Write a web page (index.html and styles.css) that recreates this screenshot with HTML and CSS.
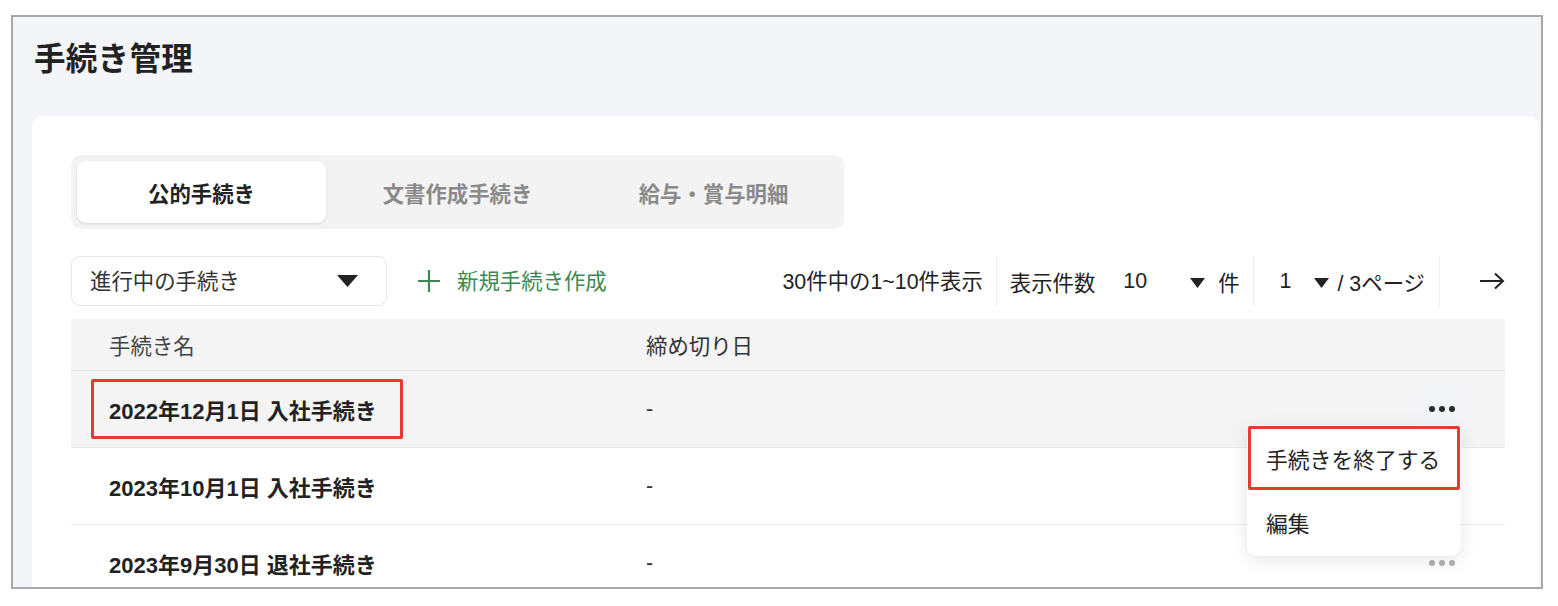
FILE: index.html
```html
<!DOCTYPE html>
<html lang="ja">
<head>
<meta charset="utf-8">
<title>手続き管理</title>
<link rel="stylesheet" href="styles.css">
</head>
<body>
<div class="frame">
  <h1 class="title">手続き管理</h1>
  <div class="card">
    <div class="tabs">
      <div class="tab active">公的手続き</div>
      <div class="tab">文書作成手続き</div>
      <div class="tab">給与・賞与明細</div>
    </div>

    <div class="toolbar">
      <div class="select">
        <span>進行中の手続き</span>
        <svg class="tri-lg" width="21" height="12" viewBox="0 0 21 12"><polygon points="0,0 21,0 10.5,12" fill="#222"/></svg>
      </div>
      <div class="new-btn">
        <svg width="22" height="22" viewBox="0 0 22 22"><path d="M11 0 V22 M0 11 H22" stroke="#3b8a52" stroke-width="2.2" fill="none"/></svg>
        <span>新規手続き作成</span>
      </div>
      <div class="pager">
        <div class="pg-item">30件中の1~10件表示</div>
        <div class="divider"></div>
        <div class="pg-item per">
          <span>表示件数</span>
          <span class="num">10</span>
          <svg class="tri" width="15" height="10" viewBox="0 0 15 10"><polygon points="0,0 15,0 7.5,10" fill="#222"/></svg>
          <span class="unit">件</span>
        </div>
        <div class="divider"></div>
        <div class="pg-item page">
          <span class="num">1</span>
          <svg class="tri" width="15" height="10" viewBox="0 0 15 10"><polygon points="0,0 15,0 7.5,10" fill="#222"/></svg>
          <span class="unit">/ 3ページ</span>
        </div>
        <div class="divider"></div>
        <div class="pg-item arrow">
          <svg width="25" height="18" viewBox="0 0 25 18"><path d="M0 9 H23 M15 1.5 L23 9 L15 16.5" stroke="#222" stroke-width="2" fill="none" stroke-linejoin="miter"/></svg>
        </div>
      </div>
    </div>

    <div class="table">
      <div class="row head">
        <div class="c-name">手続き名</div>
        <div class="c-date">締め切り日</div>
      </div>
      <div class="row body hover">
        <div class="c-name"><span class="name marked">2022年12月1日 入社手続き</span></div>
        <div class="c-date">-</div>
        <div class="c-act"><div class="dots on"><i></i><i></i><i></i></div></div>
        <div class="menu">
          <div class="menu-item marked">手続きを終了する</div>
          <div class="menu-item">編集</div>
        </div>
      </div>
      <div class="row body">
        <div class="c-name"><span class="name">2023年10月1日 入社手続き</span></div>
        <div class="c-date">-</div>
        <div class="c-act"><div class="dots"><i></i><i></i><i></i></div></div>
      </div>
      <div class="row body">
        <div class="c-name"><span class="name">2023年9月30日 退社手続き</span></div>
        <div class="c-date">-</div>
        <div class="c-act"><div class="dots"><i></i><i></i><i></i></div></div>
      </div>
    </div>
  </div>
</div>
</body>
</html>
```
FILE: styles.css
```css
* { box-sizing: border-box; }
html, body { margin: 0; padding: 0; background: #ffffff; }
body {
  font-family: "Liberation Sans", "Noto Sans CJK JP", sans-serif;
  color: #222;
}
.frame {
  margin: 15px 0 0 11px;
  width: 1532px;
  height: 574px;
  border: 2px solid #a9a9a9;
  background: #f4f5f9;
  overflow: hidden;
  padding: 0 0 0 19px;
}
.title {
  margin: 0;
  padding: 22px 0 0 2px;
  height: 63px;
  font-size: 31.5px;
  line-height: 40px;
  font-weight: 700;
  color: #222;
  letter-spacing: 0.3px;
}
.card {
  margin-top: 36px;
  width: 1507px;
  height: 600px;
  background: #fff;
  border-radius: 10px;
  padding: 39px 34px 0 39px;
}
.tabs {
  display: inline-flex;
  gap: 7px;
  padding: 6px;
  background: #f3f3f3;
  border-radius: 10px;
}
.tab {
  width: 249px;
  height: 62px;
  display: flex;
  align-items: center;
  justify-content: center;
  font-size: 21.4px;
  font-weight: 700;
  color: #8a8a8a;
  border-radius: 9px;
}
.tab.active {
  background: #fff;
  color: #222;
  box-shadow: 0 1px 3px rgba(0,0,0,0.12);
}
.toolbar {
  margin-top: 27px;
  height: 50px;
  display: flex;
  align-items: center;
  font-size: 21.4px;
}
.select {
  width: 316px;
  height: 50px;
  border: 1px solid #e6e6e6;
  border-radius: 9px;
  display: flex;
  align-items: center;
  justify-content: space-between;
  padding: 0 28px 0 18px;
  color: #333;
}
.select span, .new-btn span, .pg-item { padding-bottom: 3px; }
.tri-lg { display: block; }
.new-btn {
  margin-left: 31px;
  display: flex;
  align-items: center;
  gap: 17px;
  color: #3b8a52;
}
.new-btn svg { display: block; }
.pager {
  margin-left: auto;
  display: flex;
  align-items: center;
  height: 50px;
  color: #222;
}
.divider {
  width: 1px;
  height: 50px;
  background: #ececec;
}
.pg-item {
  display: flex;
  align-items: center;
  height: 50px;
}
.pg-item:first-child { padding-right: 13px; }
.per { padding: 0 13px 0 13px; }
.per .num { margin-left: 28px; }
.per .tri { margin-left: 43px; }
.per .unit { margin-left: 13px; }
.page { padding: 0 14px 0 26px; }
.page .tri { margin-left: 23px; }
.page .unit { margin-left: 8px; }
.pg-item .tri { margin-top: 3px; }
.arrow { padding-left: 40px; padding-bottom: 0; }
.arrow svg { display: block; }

.table { margin-top: 13px; }
.row {
  display: flex;
  align-items: center;
  position: relative;
}
.row.head {
  height: 52px;
  background: #f4f4f4;
  border-bottom: 1px solid #e6e6e6;
  color: #444;
  font-size: 21.4px;
}
.row.body {
  height: 77px;
  border-bottom: 1px solid #e9e9e9;
  font-size: 21.4px;
}
.row.hover { background: #f4f4f4; }
.c-name { width: 575px; padding-left: 38px; }
.row.body .c-name { padding-left: 20px; }
.c-date { flex: 1; color: #333; }
.name {
  display: inline-block;
  font-size: 22px;
  font-weight: 700;
  color: #222;
  padding: 11px 23px 11px 15px;
  border: 3px solid transparent;
  border-radius: 2px;
}
.name.marked, .menu-item.marked { border-color: #e8392c; }
.c-act { padding-right: 38px; }
.dots {
  width: 50px;
  height: 50px;
  border-radius: 9px;
  display: flex;
  align-items: center;
  justify-content: center;
  gap: 4px;
}
.dots i {
  display: block;
  width: 6px;
  height: 6px;
  border-radius: 50%;
  background: #b0b0b0;
}
.dots.on { background: #f3f4f8; }
.dots.on i { background: #2a2a2a; }
.menu {
  position: absolute;
  top: 54px;
  right: 44px;
  width: 214px;
  background: #fff;
  border-radius: 10px;
  box-shadow: 0 4px 18px rgba(0,0,0,0.10);
  z-index: 5;
  padding-bottom: 1px;
}
.menu-item {
  height: 65px;
  display: flex;
  align-items: center;
  padding-left: 15px;
  font-size: 21.8px;
  color: #222;
  border: 3px solid transparent;
  border-radius: 2px;
}
.menu-item:first-child { margin: 1px 1px 0 1px; height: 64px; }
.menu-item + .menu-item { padding-left: 19px; border: none; height: 65px; }
```
